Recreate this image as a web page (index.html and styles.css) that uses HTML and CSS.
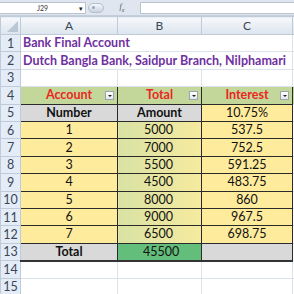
FILE: index.html
```html
<!DOCTYPE html>
<html lang="en">
<head>
    <meta charset="UTF-8">
    <title>Bank Final Account</title>
    <link rel="stylesheet" href="styles.css">
</head>
<body>
    <div class="formula-bar">
        <div class="name-box">J29<span class="drop">&#9662;</span></div>
        <div class="pill"><span></span></div>
        <div class="fx">f<sub>x</sub></div>
        <div class="input"></div>
    </div>
    <table class="sheet">
        <colgroup>
            <col class="c-head">
            <col class="c-a">
            <col class="c-b">
            <col class="c-c">
            <col class="c-d">
        </colgroup>
        <tr class="col-heads">
            <th class="corner"><span></span></th>
            <th>A</th>
            <th>B</th>
            <th>C</th>
            <th></th>
        </tr>
        <tr>
            <th>1</th>
            <td class="title" colspan="3">Bank Final Account</td>
            <td class="blank"></td>
        </tr>
        <tr>
            <th>2</th>
            <td class="title" colspan="3">Dutch Bangla Bank, Saidpur Branch, Nilphamari</td>
            <td class="blank"></td>
        </tr>
        <tr>
            <th>3</th>
            <td class="blank"></td>
            <td class="blank"></td>
            <td class="blank"></td>
            <td class="blank"></td>
        </tr>
        <tr class="hdr">
            <th>4</th>
            <td>Account<span class="filter"></span></td>
            <td>Total<span class="filter"></span></td>
            <td>Interest<span class="filter"></span></td>
            <td class="blank"></td>
        </tr>
        <tr class="sub">
            <th>5</th>
            <td class="gray">Number</td>
            <td class="gray">Amount</td>
            <td class="yel plain">10.75%</td>
            <td class="blank"></td>
        </tr>
        <tr class="row"><th>6</th><td class="yel">1</td><td class="lime">5000</td><td class="yel">537.5</td><td class="blank"></td></tr>
        <tr class="row"><th>7</th><td class="yel">2</td><td class="lime">7000</td><td class="yel">752.5</td><td class="blank"></td></tr>
        <tr class="row"><th>8</th><td class="yel">3</td><td class="lime">5500</td><td class="yel">591.25</td><td class="blank"></td></tr>
        <tr class="row"><th>9</th><td class="yel">4</td><td class="lime">4500</td><td class="yel">483.75</td><td class="blank"></td></tr>
        <tr class="row"><th>10</th><td class="yel">5</td><td class="lime">8000</td><td class="yel">860</td><td class="blank"></td></tr>
        <tr class="row"><th>11</th><td class="yel">6</td><td class="lime">9000</td><td class="yel">967.5</td><td class="blank"></td></tr>
        <tr class="row"><th>12</th><td class="yel">7</td><td class="lime">6500</td><td class="yel">698.75</td><td class="blank"></td></tr>
        <tr class="total">
            <th>13</th>
            <td class="gray">Total</td>
            <td class="green">45500</td>
            <td class="gray"></td>
            <td class="blank"></td>
        </tr>
        <tr><th>14</th><td class="blank"></td><td class="blank"></td><td class="blank"></td><td class="blank"></td></tr>
        <tr><th>15</th><td class="blank"></td><td class="blank"></td><td class="blank"></td><td class="blank"></td></tr>
    </table>
</body>
</html>
```

FILE: styles.css
```css
body{
    margin: 0;
    width: 294px;
    height: 294px;
    overflow: hidden;
    background: #fff;
    font-family: "Lato", "Liberation Sans", sans-serif;
}
.formula-bar{
    display: flex;
    align-items: center;
    height: 16px;
    background: #dfe6ef;
    border-bottom: 1px solid #c5cfdc;
    box-sizing: border-box;
}
.name-box{
    width: 86px;
    height: 12px;
    background: #fff;
    border: 1px solid #b9c4d2;
    border-left: none;
    box-sizing: border-box;
    font-size: 7px;
    line-height: 10px;
    color: #333;
    text-align: center;
    position: relative;
}
.name-box .drop{
    position: absolute;
    right: 2px;
    top: 0;
    font-size: 7px;
    color: #222;
}
.pill{
    width: 16px;
    height: 10px;
    margin-left: 2px;
    border-radius: 6px;
    background: linear-gradient(#f4f7fb, #c9d3df);
    border: 1px solid #b3bfcd;
    display: flex;
    align-items: center;
    padding-left: 3px;
    box-sizing: border-box;
}
.pill span{
    width: 3px;
    height: 3px;
    border-radius: 50%;
    background: #9aa7b7;
}
.fx{
    width: 36px;
    text-align: center;
    font-family: "Liberation Serif", serif;
    font-style: italic;
    font-size: 8px;
    color: #555;
}
.fx sub{
    font-size: 6px;
}
.input{
    flex: 1;
    height: 12px;
    background: #fff;
    border: 1px solid #b9c4d2;
    border-right: none;
    box-sizing: border-box;
}
.sheet{
    border-collapse: collapse;
    table-layout: fixed;
    width: 294px;
}
.c-head{ width: 20px; }
.c-a{ width: 97px; }
.c-b{ width: 84px; }
.c-c{ width: 91px; }
.c-d{ width: 2px; }
.sheet tr{
    height: 17.4px;
}
.sheet th{
    background: #e4ecf7;
    color: #3a4656;
    font-weight: normal;
    font-size: 12.5px;
    border: 1px solid #c0cbda;
    padding: 0;
    text-align: center;
}
.col-heads th{
    background: linear-gradient(#f6f8fb, #dce4ee);
    color: #3a4656;
    font-size: 12px;
    height: 17px;
}
.col-heads .corner{
    position: relative;
}
.corner span{
    position: absolute;
    right: 2px;
    bottom: 2px;
    width: 0;
    height: 0;
    border-left: 11px solid transparent;
    border-bottom: 11px solid #b9c6d6;
}
.sheet td{
    padding: 0;
    font-size: 12.5px;
    color: #111;
    text-align: center;
    white-space: nowrap;
    overflow: visible;
    border: 1px solid #2a2a2a;
    height: 16px;
    line-height: 16px;
}
.sheet td.blank{
    border: 1px solid #dde3ea;
}
.sheet td.title{
    text-align: left;
    padding-left: 2px;
    font-weight: bold;
    color: #7030a0;
    border: 1px solid #dde3ea;
}
.hdr td{
    background: #c4d79b;
    color: #e8281f;
    font-weight: bold;
    position: relative;
}
.filter{
    position: absolute;
    right: 3px;
    top: 4px;
    width: 9px;
    height: 9px;
    box-sizing: border-box;
    border: 1px solid #9aa5b1;
    background: linear-gradient(#ffffff, #e3e7ec);
}
.filter::after{
    content: "";
    position: absolute;
    left: 2px;
    top: 3px;
    border-left: 2px solid transparent;
    border-right: 2px solid transparent;
    border-top: 2px solid #222;
}
.gray{
    background: #d9d9d9;
    font-weight: bold;
}
.yel{
    background: #ffeb9c;
}
.plain{
    font-weight: normal;
}
.lime{
    background: linear-gradient(90deg, #d9e2a4, #f6ea9e);
    text-align: left !important;
    padding-left: 26px !important;
}
.total td{
    border-bottom: 2px solid #333;
}
.green{
    background: #63be7b;
    text-align: left !important;
    padding-left: 25px !important;
}
```
